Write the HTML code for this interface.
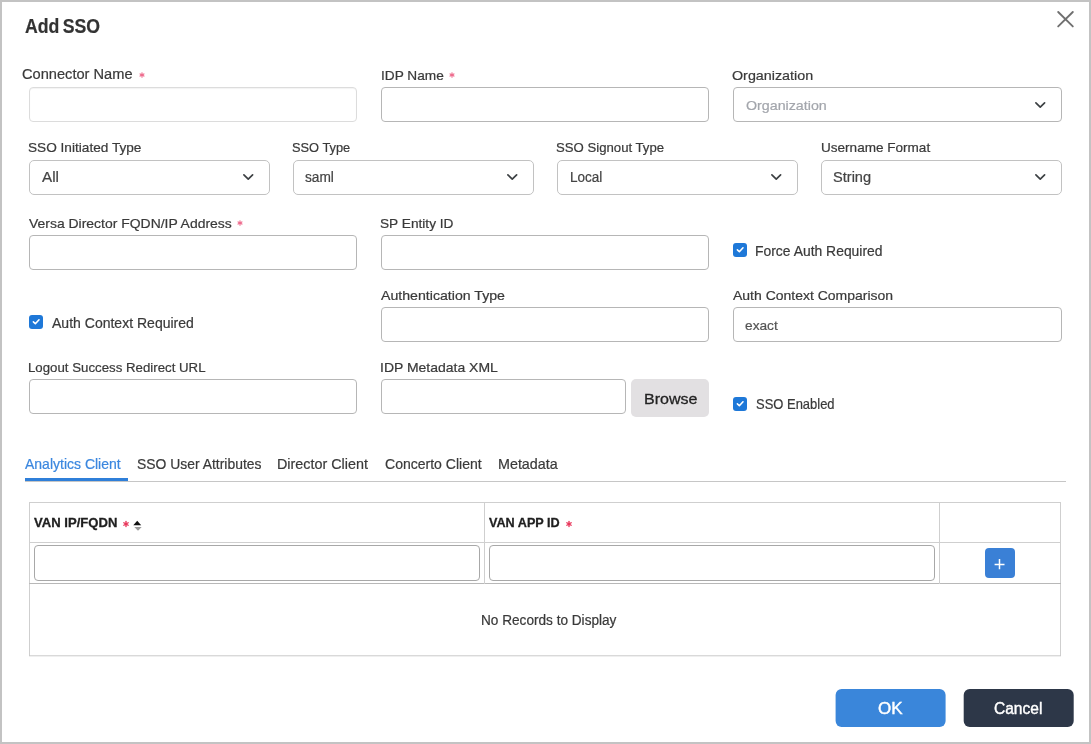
<!DOCTYPE html>
<html lang="en">
<head>
<meta charset="utf-8">
<title>Add SSO</title>
<style>
html,body{margin:0;padding:0;background:#fff;}
body{width:1091px;height:744px;overflow:hidden;position:relative;font-family:"Liberation Sans",Arial,sans-serif;}
#dlg{position:absolute;left:0;top:0;width:1087px;height:740px;border:2px solid #c3c3c3;background:#fff;}
#wrap{position:absolute;left:0;top:0;width:1091px;height:744px;will-change:transform;}
.ab,.in,.tbl,.browse{position:absolute;box-sizing:border-box;display:block;}
.in{border:1px solid #b6b6b6;border-radius:4px;background:#fff;}
.in.lite{border-color:#dcdcdc;box-shadow:inset 0 1px 1px rgba(0,0,0,.05);}
.in.sel{border-color:#c2c2c2;border-radius:5px;}
.in.tin{border-color:#a8a8a8;border-radius:4px;}
.tbl{border:1px solid #cfcfcf;border-bottom:none;background:#fff;}
.browse{background:#e2e0e2;border-radius:5px;}
.t{position:absolute;white-space:nowrap;line-height:1;transform-origin:0 0;display:block;-webkit-text-stroke:0.22px currentColor;}
</style>
</head>
<body>
<div id="dlg"></div>
<div id="wrap">
<div class="in lite" style="left:29px;top:87px;width:328px;height:35px;"></div>
<div class="in" style="left:381px;top:87px;width:328px;height:35px;"></div>
<div class="in" style="left:733px;top:87px;width:329px;height:35px;"></div>
<svg class="ab" style="left:1033.10px;top:100.20px" width="15" height="10" viewBox="0 0 15 10"><path d="M2.9 2.9 L7.25 7.1 L11.6 2.9" fill="none" stroke="#3c4043" stroke-width="1.7" stroke-linecap="round" stroke-linejoin="round"/></svg>
<div class="in sel" style="left:29px;top:160px;width:240.5px;height:35px;"></div>
<div class="in sel" style="left:293px;top:160px;width:240.5px;height:35px;"></div>
<div class="in sel" style="left:557px;top:160px;width:240.5px;height:35px;"></div>
<div class="in sel" style="left:821px;top:160px;width:241px;height:35px;"></div>
<svg class="ab" style="left:241.20px;top:171.90px" width="15" height="10" viewBox="0 0 15 10"><path d="M2.9 2.9 L7.25 7.1 L11.6 2.9" fill="none" stroke="#3c4043" stroke-width="1.7" stroke-linecap="round" stroke-linejoin="round"/></svg>
<svg class="ab" style="left:504.90px;top:171.90px" width="15" height="10" viewBox="0 0 15 10"><path d="M2.9 2.9 L7.25 7.1 L11.6 2.9" fill="none" stroke="#3c4043" stroke-width="1.7" stroke-linecap="round" stroke-linejoin="round"/></svg>
<svg class="ab" style="left:769.10px;top:171.90px" width="15" height="10" viewBox="0 0 15 10"><path d="M2.9 2.9 L7.25 7.1 L11.6 2.9" fill="none" stroke="#3c4043" stroke-width="1.7" stroke-linecap="round" stroke-linejoin="round"/></svg>
<svg class="ab" style="left:1033.10px;top:172.10px" width="15" height="10" viewBox="0 0 15 10"><path d="M2.9 2.9 L7.25 7.1 L11.6 2.9" fill="none" stroke="#3c4043" stroke-width="1.7" stroke-linecap="round" stroke-linejoin="round"/></svg>
<div class="in" style="left:29px;top:235px;width:328px;height:35px;"></div>
<div class="in" style="left:381px;top:235px;width:328px;height:35px;"></div>
<svg class="ab" style="left:733px;top:243.3px" width="14" height="14" viewBox="0 0 14 14"><rect x="0" y="0" width="14" height="14" rx="3" ry="3" fill="#1e78d8"/><path d="M4.4 6.9 L6.35 8.75 L10.0 4.8" fill="none" stroke="#fff" stroke-width="1.6" stroke-linecap="round" stroke-linejoin="round"/></svg>
<svg class="ab" style="left:28.8px;top:315.4px" width="14" height="14" viewBox="0 0 14 14"><rect x="0" y="0" width="14" height="14" rx="3" ry="3" fill="#1e78d8"/><path d="M4.4 6.9 L6.35 8.75 L10.0 4.8" fill="none" stroke="#fff" stroke-width="1.6" stroke-linecap="round" stroke-linejoin="round"/></svg>
<div class="in" style="left:381px;top:307px;width:328px;height:35px;"></div>
<div class="in" style="left:733px;top:307px;width:329px;height:35px;"></div>
<div class="in" style="left:29px;top:379px;width:328px;height:35px;"></div>
<div class="in" style="left:381px;top:379px;width:245px;height:35px;"></div>
<div class="browse" style="left:631px;top:379px;width:78px;height:38px;"></div>
<svg class="ab" style="left:733px;top:397.4px" width="14" height="14" viewBox="0 0 14 14"><rect x="0" y="0" width="14" height="14" rx="3" ry="3" fill="#1e78d8"/><path d="M4.4 6.9 L6.35 8.75 L10.0 4.8" fill="none" stroke="#fff" stroke-width="1.6" stroke-linecap="round" stroke-linejoin="round"/></svg>
<div class="ab" style="left:24.6px;top:481px;width:1041px;height:1px;background:#c6c6c6"></div>
<div class="ab" style="left:24.6px;top:477.5px;width:103.7px;height:3.5px;background:#2f7fd9"></div>
<div class="tbl" style="left:29px;top:502px;width:1032px;height:154px;"></div>
<div class="ab" style="left:29px;top:655px;width:1032px;height:1px;background:#c9c9c9;transform:translateY(0.3px)"></div>
<div class="ab" style="left:29px;top:542px;width:1032px;height:1px;background:#cfcfcf"></div>
<div class="ab" style="left:29px;top:583px;width:1032px;height:1px;background:#b8b8b8"></div>
<div class="ab" style="left:484px;top:502px;width:1px;height:82px;background:#cfcfcf"></div>
<div class="ab" style="left:939px;top:502px;width:1px;height:82px;background:#cfcfcf"></div>
<div class="in tin" style="left:34px;top:545px;width:446px;height:36px;"></div>
<div class="in tin" style="left:489px;top:545px;width:446px;height:36px;"></div>
<div class="ab" style="left:984.8px;top:548px;width:29.8px;height:30px;background:#3a80d6;border-radius:4px"></div>
<svg class="ab" style="left:993px;top:557px" width="14" height="14" viewBox="0 0 14 14"><path d="M1.6 7.5 H11.5 M6.5 2.0 V12.2" stroke="#fff" stroke-width="1.5" fill="none"/></svg>
<svg class="ab" style="left:132px;top:519px" width="12" height="13" viewBox="0 0 12 13"><path d="M1.3 6.2 L5.2 1.8 L9.2 6.2 Z" fill="#111"/><path d="M2.3 8 L9.7 8 L6 11.7 Z" fill="#9a9a9a"/></svg>
<svg class="ab" style="left:136.7px;top:69.8px" width="10" height="10" viewBox="0 0 10 10"><g stroke="#ee6a8c" stroke-width="1.15" stroke-linecap="round"><line x1="5.00" y1="2.80" x2="5.00" y2="7.20"/><line x1="3.09" y1="3.90" x2="6.91" y2="6.10"/><line x1="6.91" y1="3.90" x2="3.09" y2="6.10"/></g></svg>
<svg class="ab" style="left:446.5px;top:69.6px" width="10" height="10" viewBox="0 0 10 10"><g stroke="#ee6a8c" stroke-width="1.15" stroke-linecap="round"><line x1="5.00" y1="2.80" x2="5.00" y2="7.20"/><line x1="3.09" y1="3.90" x2="6.91" y2="6.10"/><line x1="6.91" y1="3.90" x2="3.09" y2="6.10"/></g></svg>
<svg class="ab" style="left:235.0px;top:217.8px" width="10" height="10" viewBox="0 0 10 10"><g stroke="#ee6a8c" stroke-width="1.15" stroke-linecap="round"><line x1="5.00" y1="2.80" x2="5.00" y2="7.20"/><line x1="3.09" y1="3.90" x2="6.91" y2="6.10"/><line x1="6.91" y1="3.90" x2="3.09" y2="6.10"/></g></svg>
<svg class="ab" style="left:120.8px;top:518.8px" width="10" height="10" viewBox="0 0 10 10"><g stroke="#e8365a" stroke-width="1.4" stroke-linecap="round"><line x1="5.00" y1="2.50" x2="5.00" y2="7.50"/><line x1="2.83" y1="3.75" x2="7.17" y2="6.25"/><line x1="7.17" y1="3.75" x2="2.83" y2="6.25"/></g></svg>
<svg class="ab" style="left:564.0px;top:518.8px" width="10" height="10" viewBox="0 0 10 10"><g stroke="#e8365a" stroke-width="1.4" stroke-linecap="round"><line x1="5.00" y1="2.50" x2="5.00" y2="7.50"/><line x1="2.83" y1="3.75" x2="7.17" y2="6.25"/><line x1="7.17" y1="3.75" x2="2.83" y2="6.25"/></g></svg>
<div class="ab" style="left:835px;top:689px;width:110px;height:38px;background:#3a86da;border-radius:6px;transform:translateX(0.6px)"></div>
<div class="ab" style="left:963px;top:689px;width:110px;height:38px;background:#2d3748;border-radius:6px;transform:translateX(0.7px)"></div>
<svg class="ab" style="left:1055px;top:9px" width="21" height="21" viewBox="0 0 21 21"><path d="M3.2 3 L17.8 17.4 M17.8 3 L3.2 17.4" stroke="#707070" stroke-width="1.9" stroke-linecap="round" fill="none"/></svg>
<span class="t" style="left:25.33px;top:15.82px;font-size:20.3px;font-weight:bold;word-spacing:-1.8px;color:#333;transform:scaleX(0.8707)">Add SSO</span>
<span class="t" style="left:21.94px;top:65.82px;font-size:15.1px;color:#3a3a3a;transform:scaleX(0.9692)">Connector Name</span>
<span class="t" style="left:380.77px;top:68.79px;font-size:13.6px;color:#3a3a3a;transform:scaleX(1.0047)">IDP Name</span>
<span class="t" style="left:732.24px;top:68.79px;font-size:13.6px;color:#3a3a3a;transform:scaleX(1.0521)">Organization</span>
<span class="t" style="left:28.06px;top:141.49px;font-size:13.6px;color:#3a3a3a;transform:scaleX(1.0031)">SSO Initiated Type</span>
<span class="t" style="left:292.40px;top:141.49px;font-size:13.6px;color:#3a3a3a;transform:scaleX(0.9435)">SSO Type</span>
<span class="t" style="left:556.17px;top:141.49px;font-size:13.6px;color:#3a3a3a;transform:scaleX(0.9686)">SSO Signout Type</span>
<span class="t" style="left:821.43px;top:140.69px;font-size:13.6px;color:#3a3a3a;transform:scaleX(0.9967)">Username Format</span>
<span class="t" style="left:28.58px;top:217.49px;font-size:13.6px;color:#3a3a3a;transform:scaleX(1.0258)">Versa Director FQDN/IP Address</span>
<span class="t" style="left:380.42px;top:217.49px;font-size:13.6px;color:#3a3a3a;transform:scaleX(1.0063)">SP Entity ID</span>
<span class="t" style="left:381.31px;top:289.49px;font-size:13.6px;color:#3a3a3a;transform:scaleX(1.0405)">Authentication Type</span>
<span class="t" style="left:732.91px;top:288.69px;font-size:13.6px;color:#3a3a3a;transform:scaleX(1.0288)">Auth Context Comparison</span>
<span class="t" style="left:28.17px;top:360.99px;font-size:13.6px;color:#3a3a3a;transform:scaleX(0.9748)">Logout Success Redirect URL</span>
<span class="t" style="left:380.09px;top:360.99px;font-size:13.6px;color:#3a3a3a;transform:scaleX(1.0280)">IDP Metadata XML</span>
<span class="t" style="left:755.42px;top:243.81px;font-size:14.4px;color:#3a3a3a;transform:scaleX(0.9663)">Force Auth Required</span>
<span class="t" style="left:51.61px;top:315.81px;font-size:14.4px;color:#3a3a3a;transform:scaleX(0.9746)">Auth Context Required</span>
<span class="t" style="left:755.70px;top:396.61px;font-size:14.4px;color:#3a3a3a;transform:scaleX(0.9012)">SSO Enabled</span>
<span class="t" style="left:41.89px;top:169.73px;font-size:14.5px;color:#444;transform:scaleX(1.0511)">All</span>
<span class="t" style="left:305.27px;top:171.32px;font-size:13.8px;color:#444;transform:scaleX(0.9917)">saml</span>
<span class="t" style="left:570.06px;top:171.32px;font-size:13.8px;color:#444;transform:scaleX(0.9799)">Local</span>
<span class="t" style="left:833.14px;top:171.32px;font-size:13.8px;color:#444;transform:scaleX(1.0566)">String</span>
<span class="t" style="left:745.61px;top:99.16px;font-size:13.4px;color:#a3a6ac;transform:scaleX(1.0631)">Organization</span>
<span class="t" style="left:745.19px;top:318.99px;font-size:13.6px;color:#555;transform:scaleX(1.0087)">exact</span>
<span class="t" style="left:643.77px;top:390.60px;font-size:15.0px;-webkit-text-stroke:0.28px #222;color:#222;transform:scaleX(1.0698)">Browse</span>
<span class="t" style="left:24.92px;top:456.20px;font-size:15.0px;color:#3b87df;transform:scaleX(0.9331)">Analytics Client</span>
<span class="t" style="left:136.85px;top:456.20px;font-size:15.0px;color:#3a3a3a;transform:scaleX(0.9271)">SSO User Attributes</span>
<span class="t" style="left:276.66px;top:456.20px;font-size:15.0px;color:#3a3a3a;transform:scaleX(0.9568)">Director Client</span>
<span class="t" style="left:384.77px;top:456.20px;font-size:15.0px;color:#3a3a3a;transform:scaleX(0.9351)">Concerto Client</span>
<span class="t" style="left:497.86px;top:456.20px;font-size:15.0px;color:#3a3a3a;transform:scaleX(0.9545)">Metadata</span>
<span class="t" style="left:33.65px;top:516.03px;font-size:13.2px;font-weight:bold;-webkit-text-stroke:0.3px #1f1f1f;color:#1f1f1f;transform:scaleX(0.9919)">VAN IP/FQDN</span>
<span class="t" style="left:489.44px;top:516.03px;font-size:13.2px;font-weight:bold;-webkit-text-stroke:0.3px #1f1f1f;color:#1f1f1f;transform:scaleX(0.9576)">VAN APP ID</span>
<span class="t" style="left:480.79px;top:614.32px;font-size:13.8px;color:#3a3a3a;transform:scaleX(0.9866)">No Records to Display</span>
<span class="t" style="left:878.28px;top:701.33px;font-size:15.8px;-webkit-text-stroke:0.4px #fff;color:#fff;transform:scaleX(1.0766)">OK</span>
<span class="t" style="left:994.32px;top:701.33px;font-size:15.8px;-webkit-text-stroke:0.4px #fff;color:#fff;transform:scaleX(0.9839)">Cancel</span>
</div>
</body>
</html>
